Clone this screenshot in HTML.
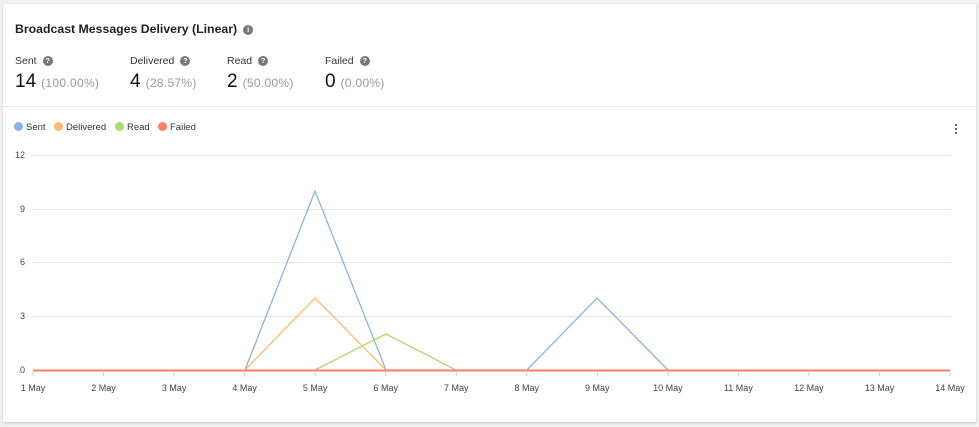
<!DOCTYPE html><html><head><style>
body{margin:0;width:979px;height:427px;background:#f3f3f3;font-family:"Liberation Sans",sans-serif;overflow:hidden;position:relative}
.card{position:absolute;left:3px;top:4px;width:973px;height:418px;background:#fff;box-shadow:0 1px 3px rgba(0,0,0,.2)}
.t{position:absolute;left:12px;top:18px;font-size:12.3px;font-weight:bold;color:#222}
.i{display:inline-block;width:10px;height:10px;border-radius:50%;background:#777;color:#fff;font-size:7.5px;text-align:center;line-height:10px;vertical-align:1px;margin-left:6px;font-weight:bold}
.st{position:absolute;top:51px;font-size:10.5px;color:#333}
.st b{display:block;font-size:19px;font-weight:normal;color:#111;margin-top:4px}
.st b span{font-size:12px;color:#999;margin-left:5px;letter-spacing:.3px}
.hr{position:absolute;left:0;right:0;top:102px;border-top:1px solid #e6e6e6}
.lg{position:absolute;top:118px;font-size:9.5px;color:#333}
.lg i{display:inline-block;width:9px;height:9px;border-radius:50%;margin-right:3px;vertical-align:-1px}
</style></head><body><div class="card">
<div class="t">Broadcast Messages Delivery (Linear)<span class="i">i</span></div>
<div class="st" style="left:12px">Sent<span class="i">?</span><b>14<span>(100.00%)</span></b></div>
<div class="st" style="left:127px">Delivered<span class="i">?</span><b>4<span>(28.57%)</span></b></div>
<div class="st" style="left:224px">Read<span class="i">?</span><b>2<span>(50.00%)</span></b></div>
<div class="st" style="left:322px">Failed<span class="i">?</span><b>0<span>(0.00%)</span></b></div>
<div class="hr"></div>
<div class="lg" style="left:11px"><i style="background:#8ab4dc"></i>Sent</div>
<div class="lg" style="left:51px"><i style="background:#fbbb6e"></i>Delivered</div>
<div class="lg" style="left:112px"><i style="background:#a9dd6c"></i>Read</div>
<div class="lg" style="left:155px"><i style="background:#fb7f6a"></i>Failed</div>
</div>
<svg style="position:absolute;left:0;top:0" width="979" height="427" font-family="Liberation Sans" font-size="9" fill="#444">
<g fill="#666"><rect x="955" y="124" width="2" height="2"/><rect x="955" y="128" width="2" height="2"/><rect x="955" y="132" width="2" height="2"/></g>
<g stroke="#e6e6e6"><line x1="33" x2="951" y1="155.5" y2="155.5"/><line x1="33" x2="951" y1="209.5" y2="209.5"/><line x1="33" x2="951" y1="262.5" y2="262.5"/><line x1="33" x2="951" y1="316.5" y2="316.5"/></g>
<g text-anchor="end"><text x="25" y="158">12</text><text x="25" y="212">9</text><text x="25" y="265">6</text><text x="25" y="319">3</text><text x="25" y="373">0</text></g>
<g text-anchor="middle" id="xl"></g>
<g fill="none" stroke-width="1.3">
<polyline stroke="#8ab4dc" points="245,370 315,191 386,370 527,370 597,298 668,370"/>
<polyline stroke="#fbbb6e" points="245,370 315,298 386,370"/>
<polyline stroke="#a9dd6c" points="315,370 386,334 456,370"/>
<line stroke="#fb7f6a" stroke-width="2" x1="33" x2="950" y1="370.5" y2="370.5"/>
</g>
<g stroke="#ccc" id="tk"></g>
</svg>
<script>
var xl=document.getElementById('xl'),tk=document.getElementById('tk'),ns='http://www.w3.org/2000/svg';
for(var i=0;i<14;i++){var x=33+i*70.54;var t=document.createElementNS(ns,'text');t.setAttribute('x',x);t.setAttribute('y',391);t.textContent=(i+1)+' May';xl.appendChild(t);
var l=document.createElementNS(ns,'line');l.setAttribute('x1',x);l.setAttribute('x2',x);l.setAttribute('y1',372);l.setAttribute('y2',376);tk.appendChild(l);}
</script>
</body></html>
